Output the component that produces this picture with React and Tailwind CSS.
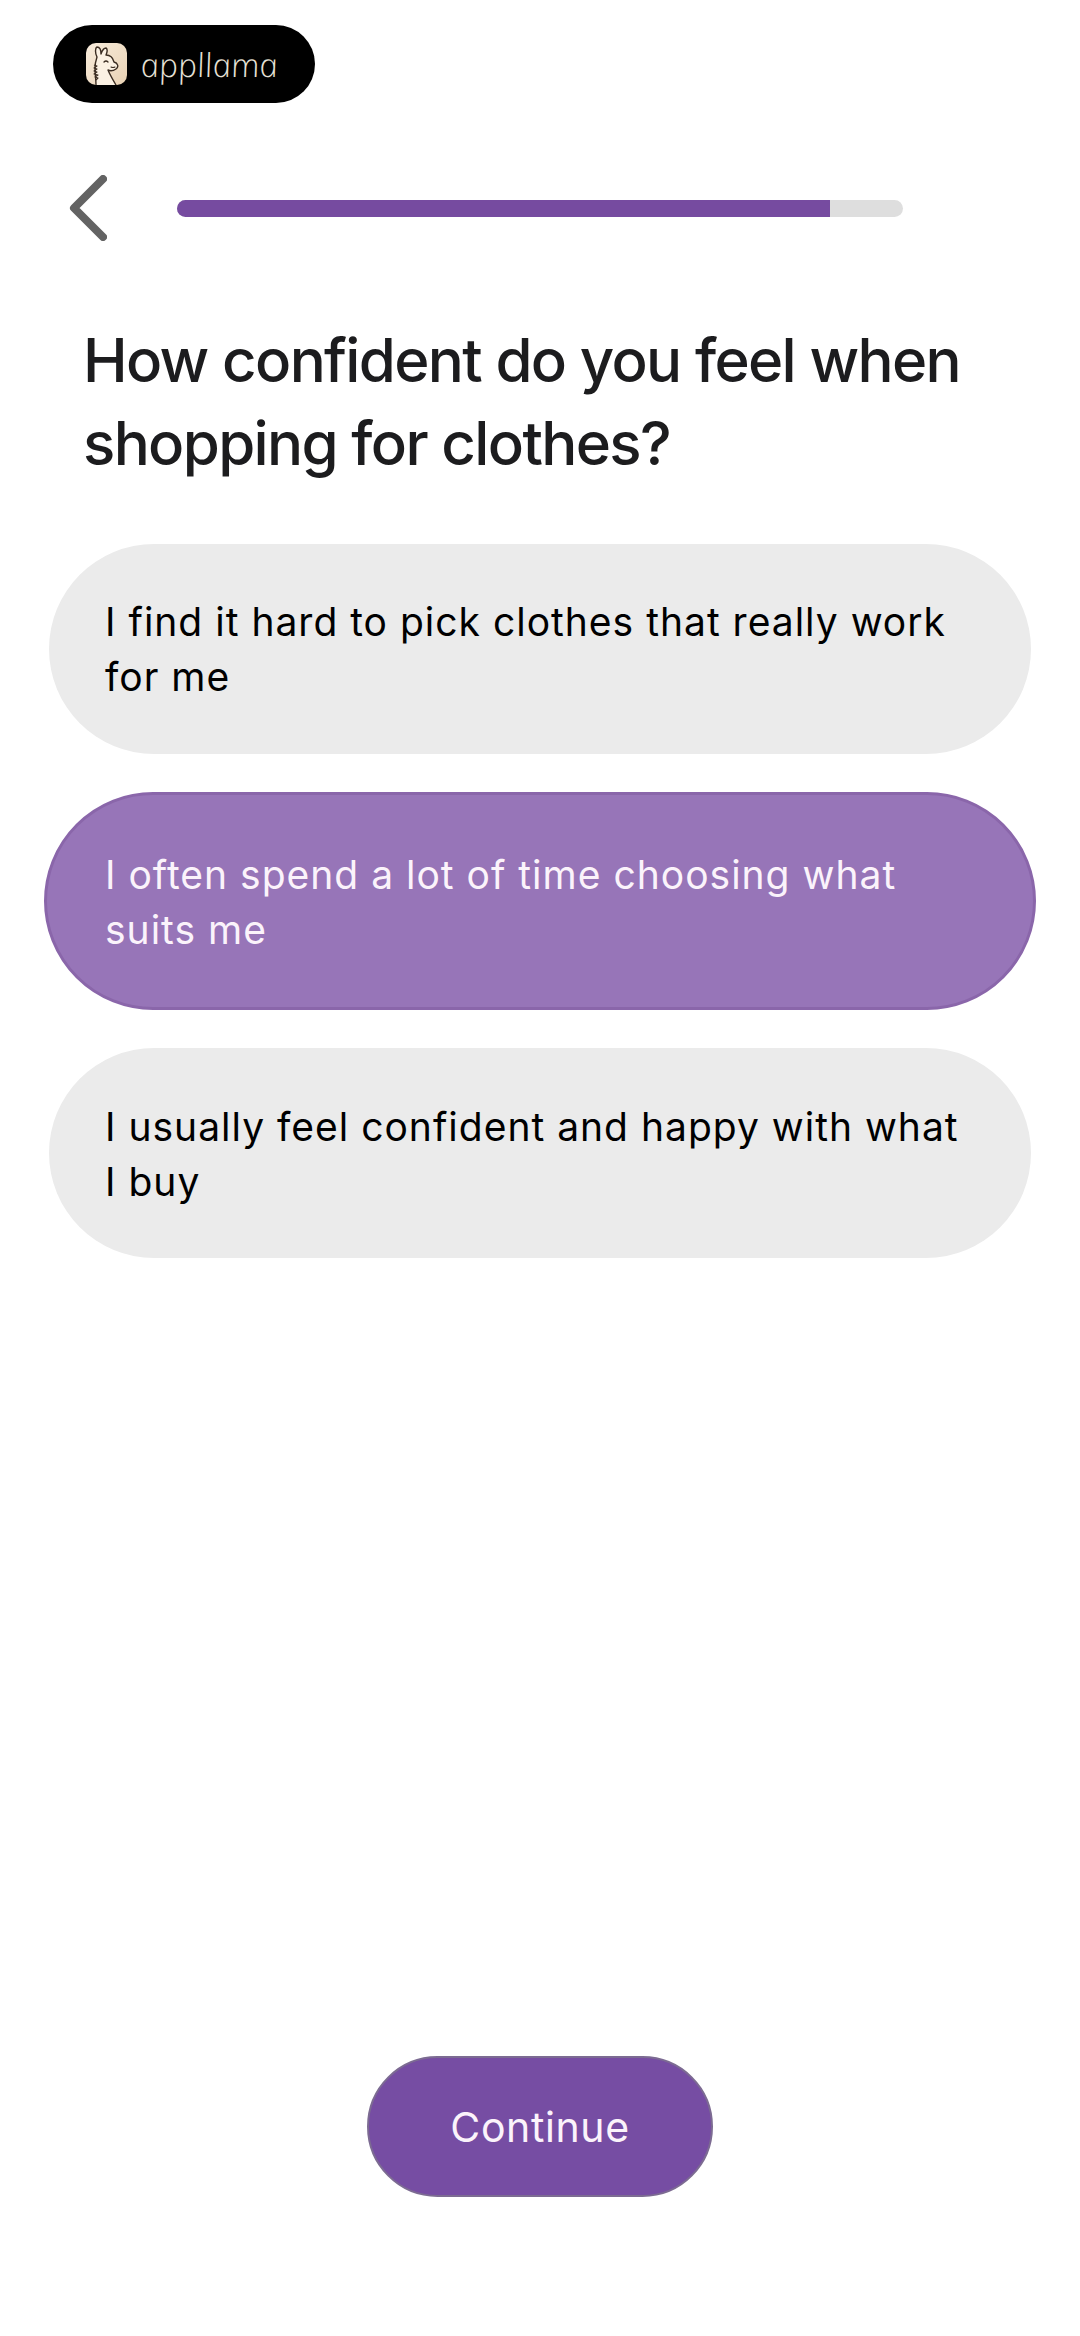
const options = [
  { label: 'I find it hard to pick clothes that really work for me', selected: false, nudge: 'pt-0' },
  { label: 'I often spend a lot of time choosing what suits me', selected: true, nudge: 'pt-[1px]' },
  { label: 'I usually feel confident and happy with what I buy', selected: false, nudge: 'pt-[2px]' },
];

// App icon of the store badge
function LlamaIcon() {
  return (
    <svg viewBox="0 0 41 42" className="w-[41px] h-[42px] rounded-[10px] shrink-0">
      <defs>
        <linearGradient id="llamaBg" x1="0" y1="0" x2="1" y2="1">
          <stop offset="0" stopColor="#f8ecdc" />
          <stop offset="1" stopColor="#e9d2b4" />
        </linearGradient>
      </defs>
      <rect width="41" height="42" fill="url(#llamaBg)" />
      <path
        d="M10 42 C10 36 9 31 9 25 C9 20 10 17 11 14 C9 10 9 5 11 4 C14 4 15 8 15 11 C16 8 18 5 20 5 C22 6 21 10 20 12 C24 12 27 15 28 19 C32 20 33 24 30 26 C27 28 24 28 22 27 C24 32 27 37 30 42"
        fill="#fbf1e3"
        stroke="#3b2d22"
        strokeWidth="1.4"
        strokeLinecap="round"
        strokeLinejoin="round"
      />
      <path d="M18 19 Q20 17 22 19" fill="none" stroke="#3b2d22" strokeWidth="1.3" strokeLinecap="round" />
      <path d="M25 24 Q27 25 29 24" fill="none" stroke="#3b2d22" strokeWidth="1.1" strokeLinecap="round" />
      <path d="M8 22 l3 1 -3 2 3 1 -3 2 3 1 -3 2 4 1 -3 2 3 1 -2 2" fill="none" stroke="#3b2d22" strokeWidth="1.1" strokeLinejoin="round" />
    </svg>
  );
}

function BackChevron() {
  return (
    <svg viewBox="0 0 38 66" className="ml-[69px] w-[38px] h-[66px] shrink-0">
      <path d="M34 4 L5 33 L34 62" fill="none" stroke="#636363" strokeWidth="8" strokeLinecap="round" strokeLinejoin="round" />
    </svg>
  );
}

function OptionRow({ label, selected, nudge }) {
  if (selected) {
    return (
      <div className={`mx-[44px] h-[218px] rounded-[109px] bg-[#9775b8] border-[3px] border-[#8a66aa] pl-[58px] pr-[78px] flex items-center ${nudge}`}>
        <p className="text-[39px] leading-[55px] tracking-[1px] text-[#fbf3fb]">{label}</p>
      </div>
    );
  }
  return (
    <div className={`mx-[49px] h-[210px] rounded-[105px] bg-[#ebebeb] pl-[56px] pr-[72px] flex items-center ${nudge}`}>
      <p className="text-[39px] leading-[55px] tracking-[1px] text-black">{label}</p>
    </div>
  );
}

export default function App() {
  return (
    <div className="min-h-[2336px] bg-white flex flex-col font-['Inter',sans-serif]">
      {/* Store badge */}
      <div className="mt-[25px] ml-[53px] w-[262px] h-[78px] rounded-[39px] bg-black flex items-center pl-[33px] gap-[13px]">
        <LlamaIcon />
        <span className="inline-block font-['Open_Sans',sans-serif] font-light italic skew-x-[10deg] text-[33px] leading-none tracking-[0.2px] text-[#e6e0d6]">appllama</span>
      </div>

      {/* Back and progress */}
      <div className="mt-[72px] h-[66px] flex items-center">
        <BackChevron />
        <div className="ml-[70px] w-[726px] h-[17px] rounded-full bg-[#dedede] overflow-hidden">
          <div className="h-full bg-[#764ba0]" style={{ width: '90%' }} />
        </div>
      </div>

      <h1 className="mt-[78px] ml-[83px] w-[940px] text-[60px] leading-[83px] font-medium tracking-[-1.65px] text-[#1c1c1e]">
        How confident do you feel when shopping for clothes?
      </h1>

      {/* Answers */}
      <div className="mt-[59px] flex flex-col gap-[38px]">
        {options.map((o) => (
          <OptionRow key={o.label} label={o.label} selected={o.selected} nudge={o.nudge} />
        ))}
      </div>

      <div className="mt-auto mb-[139px] flex justify-center">
        <button className="w-[346px] h-[141px] rounded-[71px] bg-[#764da3] border-2 border-[#7c6b92] pt-[2px] text-[41px] tracking-[0.6px] text-[#fbf3fb]">
          Continue
        </button>
      </div>
    </div>
  );
}
